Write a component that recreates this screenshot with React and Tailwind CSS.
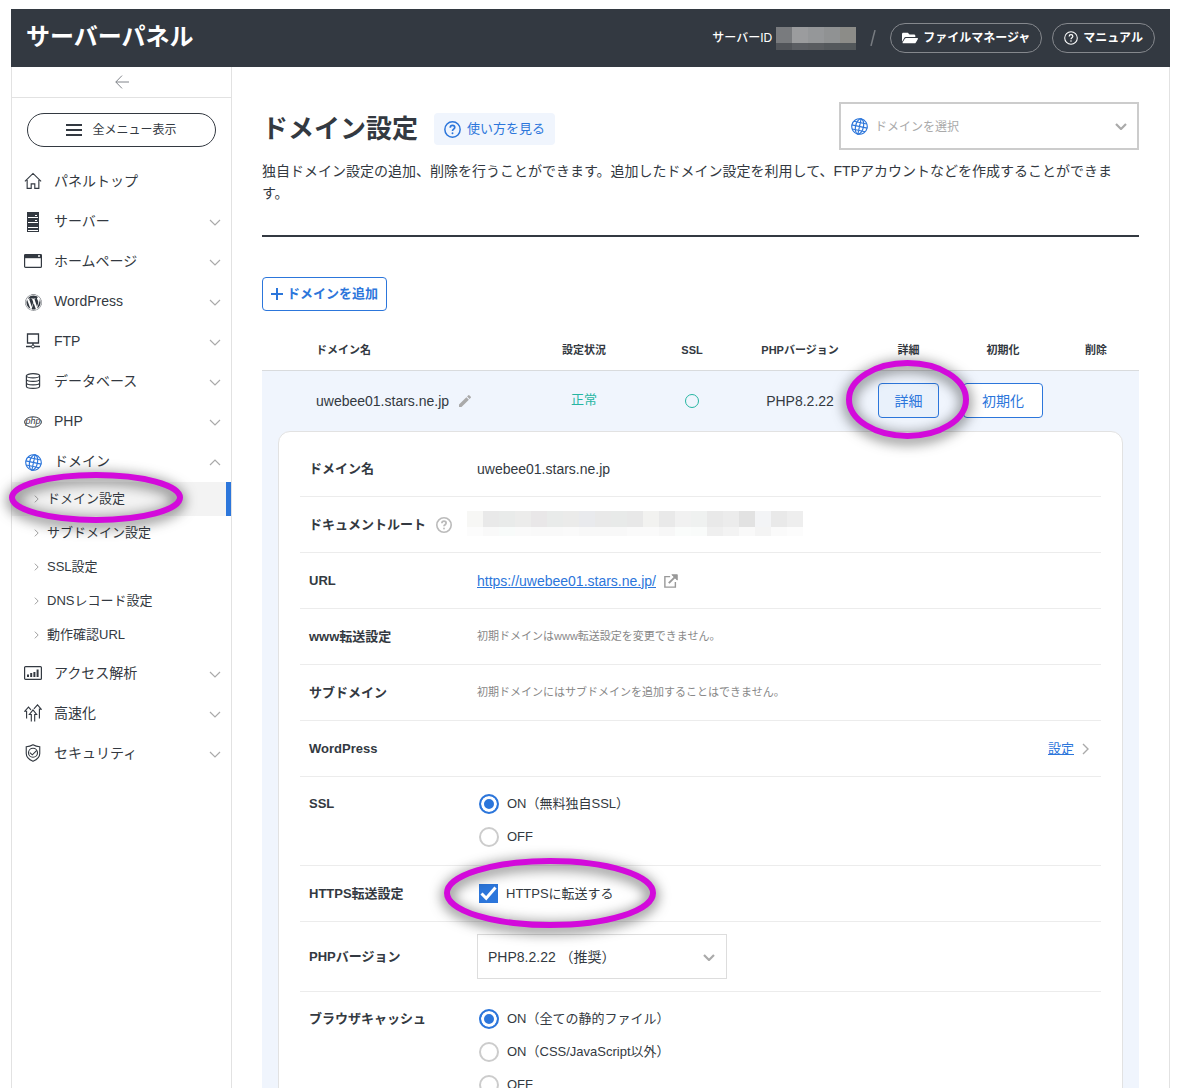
import { useState } from 'react'
import { FaFolderOpen, FaWordpress } from 'react-icons/fa'
import { MdEdit } from 'react-icons/md'

function Icon({ children, className = 'size-4' }) {
  return (
    <svg viewBox="0 0 16 16" fill="none" stroke="currentColor" className={`shrink-0 ${className}`} aria-hidden="true">
      {children}
    </svg>
  )
}

function Chevron({ dir = 'down', thick = false, className = '' }) {
  const d = { down: 'M1 1l5 5 5-5', up: 'M1 6l5-5 5 5' }[dir]
  return (
    <svg viewBox="0 0 12 7" fill="none" stroke="currentColor" strokeWidth={thick ? 2.2 : 1.2} className={`h-[7px] w-3 shrink-0 ${className}`} aria-hidden="true">
      <path d={d} />
    </svg>
  )
}

function RightChevron({ className }) {
  return (
    <svg viewBox="0 0 7 12" fill="none" stroke="currentColor" strokeWidth="1.4" className={`shrink-0 ${className}`} aria-hidden="true">
      <path d="M1 1l5 5-5 5" />
    </svg>
  )
}

function Globe({ className }) {
  return (
    <Icon className={className}>
      <g transform="rotate(12 8 8)" strokeWidth="1.1">
        <circle cx="8" cy="8" r="7.3" />
        <ellipse cx="8" cy="8" rx="3.7" ry="7.3" />
        <path d="M8 .6v14.8M.6 8h14.8M1.8 4.3h12.4M1.8 11.7h12.4" />
      </g>
    </Icon>
  )
}

function Help({ className, weight = 1.2 }) {
  return (
    <Icon className={className}>
      <circle cx="8" cy="8" r="7.2" strokeWidth={weight} />
      <path d="M5.9 6.3c0-1.3.9-2.1 2.1-2.1s2.1.8 2.1 1.9c0 1.6-2.1 1.6-2.1 3.2" strokeWidth={weight + 0.2} />
      <circle cx="8" cy="11.5" r=".9" fill="currentColor" stroke="none" />
    </Icon>
  )
}

const icons = {
  home: (
    <Icon className="size-[18px]">
      <path d="M.8 8.4L8 1.3l7.2 7.1M2.8 7v7.5h3.6v-4h3.2v4h3.6V7" />
    </Icon>
  ),
  server: (
    <svg viewBox="0 0 12 20" className="mt-0.5 h-5 w-3" aria-hidden="true">
      <path fill="currentColor" d="M0 0h12v20H0z" />
      <path fill="#fff" d="M1 5h10v1H1zM1 10h10v1H1zM1 15h10v1H1zM1 18h10v1H1zM8 3h2v1H8zM8 8h2v1H8z" />
    </svg>
  ),
  window: (
    <svg viewBox="0 0 18 14" className="h-3.5 w-[18px]" fill="none" stroke="currentColor" aria-hidden="true">
      <rect x=".6" y=".6" width="16.8" height="12.8" rx="1" strokeWidth="1.2" />
      <path d="M.5 2.2h17" strokeWidth="4" />
      <path d="M14 2h2" stroke="#fff" strokeWidth="1.4" />
    </svg>
  ),
  wordpress: <FaWordpress className="mt-0.5 size-[17px]" />,
  ftp: (
    <Icon>
      <path d="M2.5 1h11v9h-11zM8 10v2M1 13.5h5.5M9.5 13.5H15" strokeWidth="1.3" />
      <circle cx="8" cy="13.5" r="1.5" />
    </Icon>
  ),
  database: (
    <Icon>
      <g strokeWidth="1.2">
        <ellipse cx="8" cy="2.8" rx="6.6" ry="2.1" />
        <path d="M1.4 2.8v10.4c0 1.2 3 2.1 6.6 2.1s6.6-.9 6.6-2.1V2.8M1.4 6.3c0 1.2 3 2.1 6.6 2.1s6.6-.9 6.6-2.1M1.4 9.8c0 1.2 3 2.1 6.6 2.1s6.6-.9 6.6-2.1" />
      </g>
    </Icon>
  ),
  php: (
    <svg viewBox="0 0 18 12" className="mt-0.5 h-3 w-[18px]" aria-hidden="true">
      <ellipse cx="9" cy="6" rx="8.4" ry="5.2" fill="none" stroke="currentColor" />
      <text x="9" y="8.2" textAnchor="middle" fontSize="9" fontStyle="italic" fill="currentColor">php</text>
    </svg>
  ),
  domain: <Globe className="mt-0.5 size-[17px] text-[#2c76db]" />,
  chart: (
    <svg viewBox="0 0 18 14" className="h-3.5 w-[18px]" fill="none" stroke="currentColor" aria-hidden="true">
      <rect x=".6" y=".6" width="16.8" height="12.8" rx="1" strokeWidth="1.2" />
      <path d="M4 11V8.5M7.2 11V7M10.4 11V6M13.6 11V3.5" strokeWidth="2" />
    </svg>
  ),
  speed: (
    <Icon className="size-[18px]">
      <path d="M2.3 12.8V6.4H.7L4 2.8l2.2 2.4M6.5 15.5V9.3H4.8L8 5.3l3.2 4H9.5v6.2M8.8 4.4L12 .8l3.3 3.8h-1.6v8.2" />
    </Icon>
  ),
  shield: (
    <Icon className="size-[18px]">
      <path d="M8 .7c2 1.2 4 1.7 6 1.8v6c0 3.3-2.6 5.5-6 6.9-3.4-1.4-6-3.6-6-6.9v-6C4 2.4 6 1.9 8 .7z" />
      <circle cx="8" cy="7.8" r="4" />
      <path d="M5.2 7.6l2.2 2 4-4" />
    </Icon>
  ),
}

const menu = [
  { icon: 'home', label: 'パネルトップ', leaf: true },
  { icon: 'server', label: 'サーバー' },
  { icon: 'window', label: 'ホームページ' },
  { icon: 'wordpress', label: 'WordPress' },
  { icon: 'ftp', label: 'FTP' },
  { icon: 'database', label: 'データベース' },
  { icon: 'php', label: 'PHP' },
  {
    icon: 'domain',
    label: 'ドメイン',
    children: ['ドメイン設定', 'サブドメイン設定', 'SSL設定', 'DNSレコード設定', '動作確認URL'],
  },
  { icon: 'chart', label: 'アクセス解析' },
  { icon: 'speed', label: '高速化' },
  { icon: 'shield', label: 'セキュリティ' },
]

const idTop = ['#797b7e', '#9b9c9e', '#959799', '#909293', '#8c8c88']
const idBottom = ['#515459', '#5b5e63', '#595c60', '#54585c', '#52575a']

const rootTop = ['#f7f7f5', '#e9e9e9', '#e9ebea', '#ececeb', '#e9e7e8', '#e9ebea', '#ebebea', '#e9eaed', '#e9e9e9', '#e8eae9', '#e8e8e8', '#f2f2f0', '#e9e9e9', '#f1f1f1', '#eff1f0', '#e9e9e9', '#ececec', '#e2e2e2', '#f3f4f6', '#e9e9e9', '#eeeeee']
const rootBottom = ['#fcfcfc', '#f9f9f9', '#f8fbfa', '#fafafa', '#f9f9f9', '#f9f9f9', '#fafafa', '#f8f8f8', '#f8f8f8', '#f8f8f8', '#fafafa', '#fafafa', '#f7f7f7', '#fafcfb', '#f9fbfa', '#efefef', '#f3f3f3', '#f9f9f9', '#f4f4f4', '#fafafa', '#fcfcfc']

// Pixelated strip that covers a private value
function Mosaic({ top, bottom, bottomHeight }) {
  return (
    <div className="flex flex-col">
      <div className="flex">
        {top.map((c, i) => (
          <span key={i} className="size-4" style={{ backgroundColor: c }} />
        ))}
      </div>
      <div className="flex">
        {bottom.map((c, i) => (
          <span key={i} className={`w-4 ${bottomHeight}`} style={{ backgroundColor: c }} />
        ))}
      </div>
    </div>
  )
}

// Hand-marked ring laid over a control
function Ring({ w, h, className }) {
  return (
    <svg
      viewBox={`0 0 ${w} ${h}`}
      className={`pointer-events-none absolute z-10 max-w-none overflow-visible drop-shadow-[0_3px_7px_rgba(0,0,0,0.8)] ${className}`}
      aria-hidden="true"
    >
      <ellipse cx={w / 2} cy={h / 2} rx={w / 2 - 3} ry={h / 2 - 3} fill="none" stroke="#d30adb" strokeWidth="6" />
    </svg>
  )
}

function Header() {
  return (
    <header className="flex h-[58px] items-center justify-between bg-[#333941] px-[15px] text-white">
      <h1 className="pb-0.5 text-2xl font-bold">サーバーパネル</h1>
      <div className="flex items-center text-xs font-bold">
        <span className="mr-1 font-medium">サーバーID</span>
        <Mosaic top={idTop} bottom={idBottom} bottomHeight="h-[7px]" />
        <svg viewBox="0 0 6 16" className="mx-3.5 h-4 w-1.5" aria-hidden="true">
          <path d="M5 0L1 16" stroke="#777b80" strokeWidth="1.5" />
        </svg>
        <a href="#files" className="mr-2.5 flex h-[30px] items-center gap-[5px] rounded-full border border-[#85888d] px-[11px]">
          <FaFolderOpen className="size-4" />
          ファイルマネージャ
        </a>
        <a href="#manual" className="flex h-[30px] items-center gap-[5px] rounded-full border border-[#85888d] px-[11px]">
          <Help className="size-3.5" />
          マニュアル
        </a>
      </div>
    </header>
  )
}

function Sidebar() {
  return (
    <aside className="w-[221px] shrink-0 border-x border-[#e2e2e2]">
      <button type="button" aria-label="メニューを閉じる" className="flex h-[31px] w-full items-center justify-center border-b border-[#e2e2e2] text-[#80848a]">
        <svg viewBox="0 0 14 14" className="size-3.5" fill="none" stroke="currentColor" aria-hidden="true">
          <path d="M14 7H.8M7 .6L.8 7 7 13.4" />
        </svg>
      </button>
      <div className="px-[15px] pt-[15px] pb-3.5">
        <button type="button" className="flex h-[34px] w-full items-center justify-center gap-2.5 rounded-full border border-[#333941] text-xs">
          <svg viewBox="0 0 16 12" className="h-3 w-4" stroke="currentColor" strokeWidth="2" aria-hidden="true">
            <path d="M0 1h16M0 6h16M0 11h16" />
          </svg>
          全メニュー表示
        </button>
      </div>
      <nav>
        <ul>
          {menu.map((item) => (
            <li key={item.label}>
              <a href="#menu" className="flex h-10 items-center pr-2.5 pl-3 text-sm">
                <span className="mr-3 flex w-[18px] justify-center">{icons[item.icon]}</span>
                <span className="grow">{item.label}</span>
                {!item.leaf && <Chevron dir={item.children ? 'up' : 'down'} className="mt-0.5 text-[#aaa]" />}
              </a>
              {item.children && (
                <ul className="py-px">
                  {item.children.map((sub, i) => (
                    <li key={sub} className="relative">
                      <a
                        href="#submenu"
                        className={`flex h-[34px] items-center gap-2 pl-[22px] text-[13px] ${i === 0 ? 'border-r-5 border-[#2c76db] bg-[#f3f3f3]' : ''}`}
                      >
                        <RightChevron className="h-2 w-[5px] text-[#999]" />
                        {sub}
                      </a>
                      {i === 0 && <Ring w={174} h={51} className="-top-2.5 -left-[3px] h-[51px] w-[174px]" />}
                    </li>
                  ))}
                </ul>
              )}
            </li>
          ))}
        </ul>
      </nav>
    </aside>
  )
}

function Row({ label, htmlFor, children, tall = false, extra }) {
  return (
    <div className={`flex border-b border-[#ececec] pl-[9px] ${tall ? 'items-start pt-[17px] pb-[18px]' : 'min-h-14 items-center'}`}>
      <div className="flex w-[168px] shrink-0 items-center gap-2.5 text-[13px] font-bold">
        {htmlFor ? <label htmlFor={htmlFor}>{label}</label> : label}
        {extra}
      </div>
      <div className="flex min-w-0 grow items-center">{children}</div>
    </div>
  )
}

function Radios({ name, options }) {
  const [value, setValue] = useState(options[0])
  return (
    <div role="radiogroup" className="flex flex-col gap-[13px] pl-0.5">
      {options.map((opt) => (
        <label key={opt} className="flex h-5 items-center gap-2 text-[13px]">
          <input
            type="radio"
            name={name}
            checked={value === opt}
            onChange={() => setValue(opt)}
            className="size-5 appearance-none rounded-full border-2 border-[#ccc] bg-white checked:border-[#2c76db] checked:bg-[#2c76db] checked:shadow-[inset_0_0_0_3px_white]"
          />
          {opt}
        </label>
      ))}
    </div>
  )
}

function Details() {
  const [https, setHttps] = useState(true)
  return (
    <div className="rounded-xl border border-[#e2e2e2] bg-white px-[21px] pt-[9px] pb-5">
      <Row label="ドメイン名">
        <span className="text-sm">uwebee01.stars.ne.jp</span>
      </Row>
      <Row label="ドキュメントルート" extra={<Help weight={1.6} className="size-4 text-[#bbb]" />}>
        <div className="-mt-0.5 -ml-2.5">
          <Mosaic top={rootTop} bottom={rootBottom} bottomHeight="h-[9px]" />
        </div>
      </Row>
      <Row label="URL">
        <a href="#site" className="flex items-center gap-2 text-sm text-[#2c76db]">
          <span className="underline">https://uwebee01.stars.ne.jp/</span>
          <Icon className="size-3.5 text-[#999]">
            <path d="M7 3H1v12h12V9" strokeWidth="1.6" />
            <path d="M5.5 10.5L13 3" strokeWidth="2.2" />
            <path d="M9 .8h6.2V7z" fill="currentColor" />
          </Icon>
        </a>
      </Row>
      <Row label="www転送設定">
        <span className="text-[11px] text-[#888]">初期ドメインはwww転送設定を変更できません。</span>
      </Row>
      <Row label="サブドメイン">
        <span className="text-[11px] text-[#888]">初期ドメインにはサブドメインを追加することはできません。</span>
      </Row>
      <Row label="WordPress">
        <a href="#wordpress" className="ml-auto flex items-center gap-2 pr-3 text-[13px] text-[#2c76db]">
          <span className="underline">設定</span>
          <RightChevron className="h-3 w-[7px] text-[#aaa]" />
        </a>
      </Row>
      <Row label="SSL" tall>
        <Radios name="ssl" options={['ON（無料独自SSL）', 'OFF']} />
      </Row>
      <Row label="HTTPS転送設定">
        <label className="relative flex items-center gap-2 pl-0.5 text-[13px]">
          <span className="relative flex">
            <input
              type="checkbox"
              checked={https}
              onChange={(e) => setHttps(e.target.checked)}
              className="size-[19px] appearance-none border border-[#ccc] checked:border-[#2c76db] checked:bg-[#2c76db]"
            />
            {https && (
              <svg viewBox="0 0 19 19" fill="none" stroke="#fff" strokeWidth="3" className="pointer-events-none absolute inset-0 size-[19px]" aria-hidden="true">
                <path d="M2.5 9.5l4.7 4.8L16.5 3.5" />
              </svg>
            )}
          </span>
          HTTPSに転送する
          <Ring w={212} h={70} className="-top-[26px] -left-[33px] h-[70px] w-[212px]" />
        </label>
      </Row>
      <Row label="PHPバージョン" htmlFor="php">
        <div className="relative my-3 flex w-[250px] items-center">
          <select id="php" className="h-[45px] w-full appearance-none border border-[#ddd] bg-white px-2.5 text-sm">
            <option>PHP8.2.22 （推奨）</option>
          </select>
          <Chevron thick className="pointer-events-none absolute right-3 mt-0.5 text-[#aaa]" />
        </div>
      </Row>
      <Row label="ブラウザキャッシュ" tall>
        <Radios name="cache" options={['ON（全ての静的ファイル）', 'ON（CSS/JavaScript以外）', 'OFF']} />
      </Row>
    </div>
  )
}

function DomainTable() {
  return (
    <table className="w-full table-fixed border-collapse text-center">
      <colgroup>
        <col />
        <col className="w-[108px]" />
        <col className="w-[108px]" />
        <col className="w-[108px]" />
        <col className="w-[109px]" />
        <col className="w-20" />
        <col className="w-24" />
      </colgroup>
      <thead>
        <tr className="h-10 border-b border-[#d9dbdd] text-[11px] font-bold">
          <th className="pl-[54px] text-left">ドメイン名</th>
          <th>設定状況</th>
          <th>SSL</th>
          <th>PHPバージョン</th>
          <th>詳細</th>
          <th>初期化</th>
          <th className="pl-2.5">削除</th>
        </tr>
      </thead>
      <tbody className="bg-[#f0f5fd]">
        <tr className="h-[61px] text-sm">
          <td className="pl-[54px]">
            <div className="flex items-center gap-2">
              uwebee01.stars.ne.jp
              <MdEdit className="size-4 text-[#aaa]" />
            </div>
          </td>
          <td className="text-[13px] text-[#26b5a2]">正常</td>
          <td>
            <span className="mx-auto block size-3.5 rounded-full border border-[#26b5a2]" />
          </td>
          <td>PHP8.2.22</td>
          <td>
            <div className="relative mx-auto w-[61px]">
              <button type="button" className="block h-[35px] w-full rounded border border-[#2c76db] bg-[#e9f1fb] text-[#2c76db]">
                詳細
              </button>
              <Ring w={123} h={79} className="-top-[23px] -left-8 h-[79px] w-[123px]" />
            </div>
          </td>
          <td>
            <button type="button" className="block h-[35px] w-full rounded border border-[#2c76db] bg-white text-[#2c76db]">
              初期化
            </button>
          </td>
          <td />
        </tr>
        <tr>
          <td colSpan={7} className="px-4 pb-4 text-left">
            <Details />
          </td>
        </tr>
      </tbody>
    </table>
  )
}

export default function App() {
  return (
    <div
      lang="ja"
      className="flex min-h-screen flex-col bg-white px-[11px] pt-[9px] font-['Liberation_Sans','Noto_Sans_CJK_JP',sans-serif] text-[#333941]"
    >
      <Header />
      <div className="flex grow">
        <Sidebar />
        <main className="min-w-0 grow border-r border-[#e2e2e2] px-[30px] pt-[35px]">
          <div className="flex items-center justify-between">
            <div className="flex items-center gap-4 pt-1.5">
              <h2 className="text-[26px] font-bold">ドメイン設定</h2>
              <a href="#help" className="flex h-8 items-center gap-1.5 rounded bg-[#f0f5fd] px-2.5 text-[13px] text-[#2c76db]">
                <Help weight={1.4} className="size-[17px]" />
                使い方を見る
              </a>
            </div>
            <div className="relative flex w-[300px] items-center">
              <Globe className="pointer-events-none absolute left-3 size-[17px] text-[#2c76db]" />
              <select aria-label="ドメインを選択" className="h-12 w-full appearance-none border-2 border-[#ccc] bg-white pt-0.5 pl-[34px] text-xs text-[#aaa]">
                <option>ドメインを選択</option>
              </select>
              <Chevron thick className="pointer-events-none absolute right-3 text-[#aaa]" />
            </div>
          </div>
          <p className="mt-2.5 border-b-2 border-[#333941] pr-2 pb-[31px] text-sm leading-[22px]">
            独自ドメイン設定の追加、削除を行うことができます。追加したドメイン設定を利用して、FTPアカウントなどを作成することができます。
          </p>
          <button type="button" className="mt-10 mb-[19px] flex h-[34px] items-center gap-1 rounded border border-[#2c76db] px-2 text-[13px] font-bold text-[#2c76db]">
            <svg viewBox="0 0 12 12" className="size-3" stroke="currentColor" strokeWidth="2" aria-hidden="true">
              <path d="M6 0v12M0 6h12" />
            </svg>
            ドメインを追加
          </button>
          <DomainTable />
        </main>
      </div>
    </div>
  )
}
